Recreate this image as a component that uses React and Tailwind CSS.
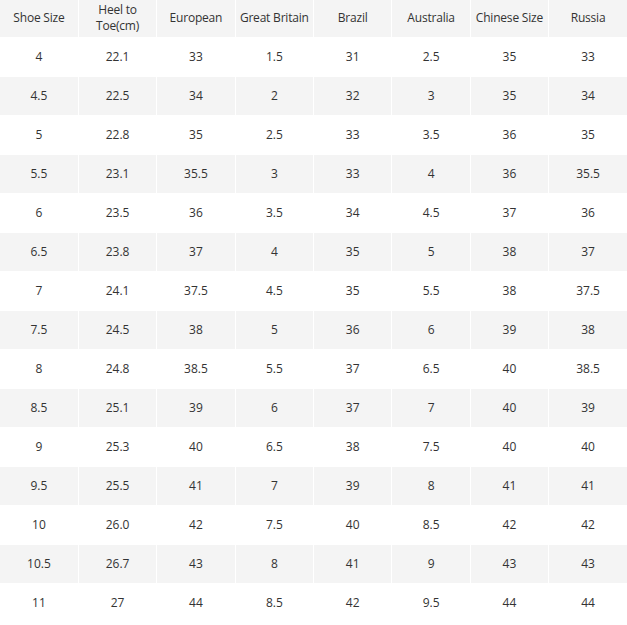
const headers = ["Shoe Size", "Heel to Toe(cm)", "European", "Great Britain", "Brazil", "Australia", "Chinese Size", "Russia"];

const rows = [
  ["4", "22.1", "33", "1.5", "31", "2.5", "35", "33"],
  ["4.5", "22.5", "34", "2", "32", "3", "35", "34"],
  ["5", "22.8", "35", "2.5", "33", "3.5", "36", "35"],
  ["5.5", "23.1", "35.5", "3", "33", "4", "36", "35.5"],
  ["6", "23.5", "36", "3.5", "34", "4.5", "37", "36"],
  ["6.5", "23.8", "37", "4", "35", "5", "38", "37"],
  ["7", "24.1", "37.5", "4.5", "35", "5.5", "38", "37.5"],
  ["7.5", "24.5", "38", "5", "36", "6", "39", "38"],
  ["8", "24.8", "38.5", "5.5", "37", "6.5", "40", "38.5"],
  ["8.5", "25.1", "39", "6", "37", "7", "40", "39"],
  ["9", "25.3", "40", "6.5", "38", "7.5", "40", "40"],
  ["9.5", "25.5", "41", "7", "39", "8", "41", "41"],
  ["10", "26.0", "42", "7.5", "40", "8.5", "42", "42"],
  ["10.5", "26.7", "43", "8", "41", "9", "43", "43"],
  ["11", "27", "44", "8.5", "42", "9.5", "44", "44"],
];

export default function App() {
  return (
    <main className="bg-white w-[627px] h-[625px] overflow-hidden font-['Open_Sans',sans-serif] text-[12px] text-[#333]">
      <table className="w-full table-fixed border-collapse">
        <thead>
          <tr className="bg-[#f4f4f4] h-[37px]">
            {headers.map((h) => (
              <th key={h} className="border-x border-white font-normal leading-[16px] text-center px-0 whitespace-nowrap tracking-[-0.2px] first:border-l-0 last:border-r-0">
                {h === "Heel to Toe(cm)" ? (
                  <>Heel to<br />Toe(cm)</>
                ) : (
                  h
                )}
              </th>
            ))}
          </tr>
        </thead>
        <tbody>
          {rows.map((r, i) => (
            <tr key={i} className={`h-[39px] ${i % 2 === 1 ? "bg-[#f4f4f4]" : "bg-white"}`}>
              {r.map((c, j) => (
                <td key={j} className="border border-white text-center first:border-l-0 last:border-r-0">
                  {c}
                </td>
              ))}
            </tr>
          ))}
        </tbody>
      </table>
    </main>
  );
}
